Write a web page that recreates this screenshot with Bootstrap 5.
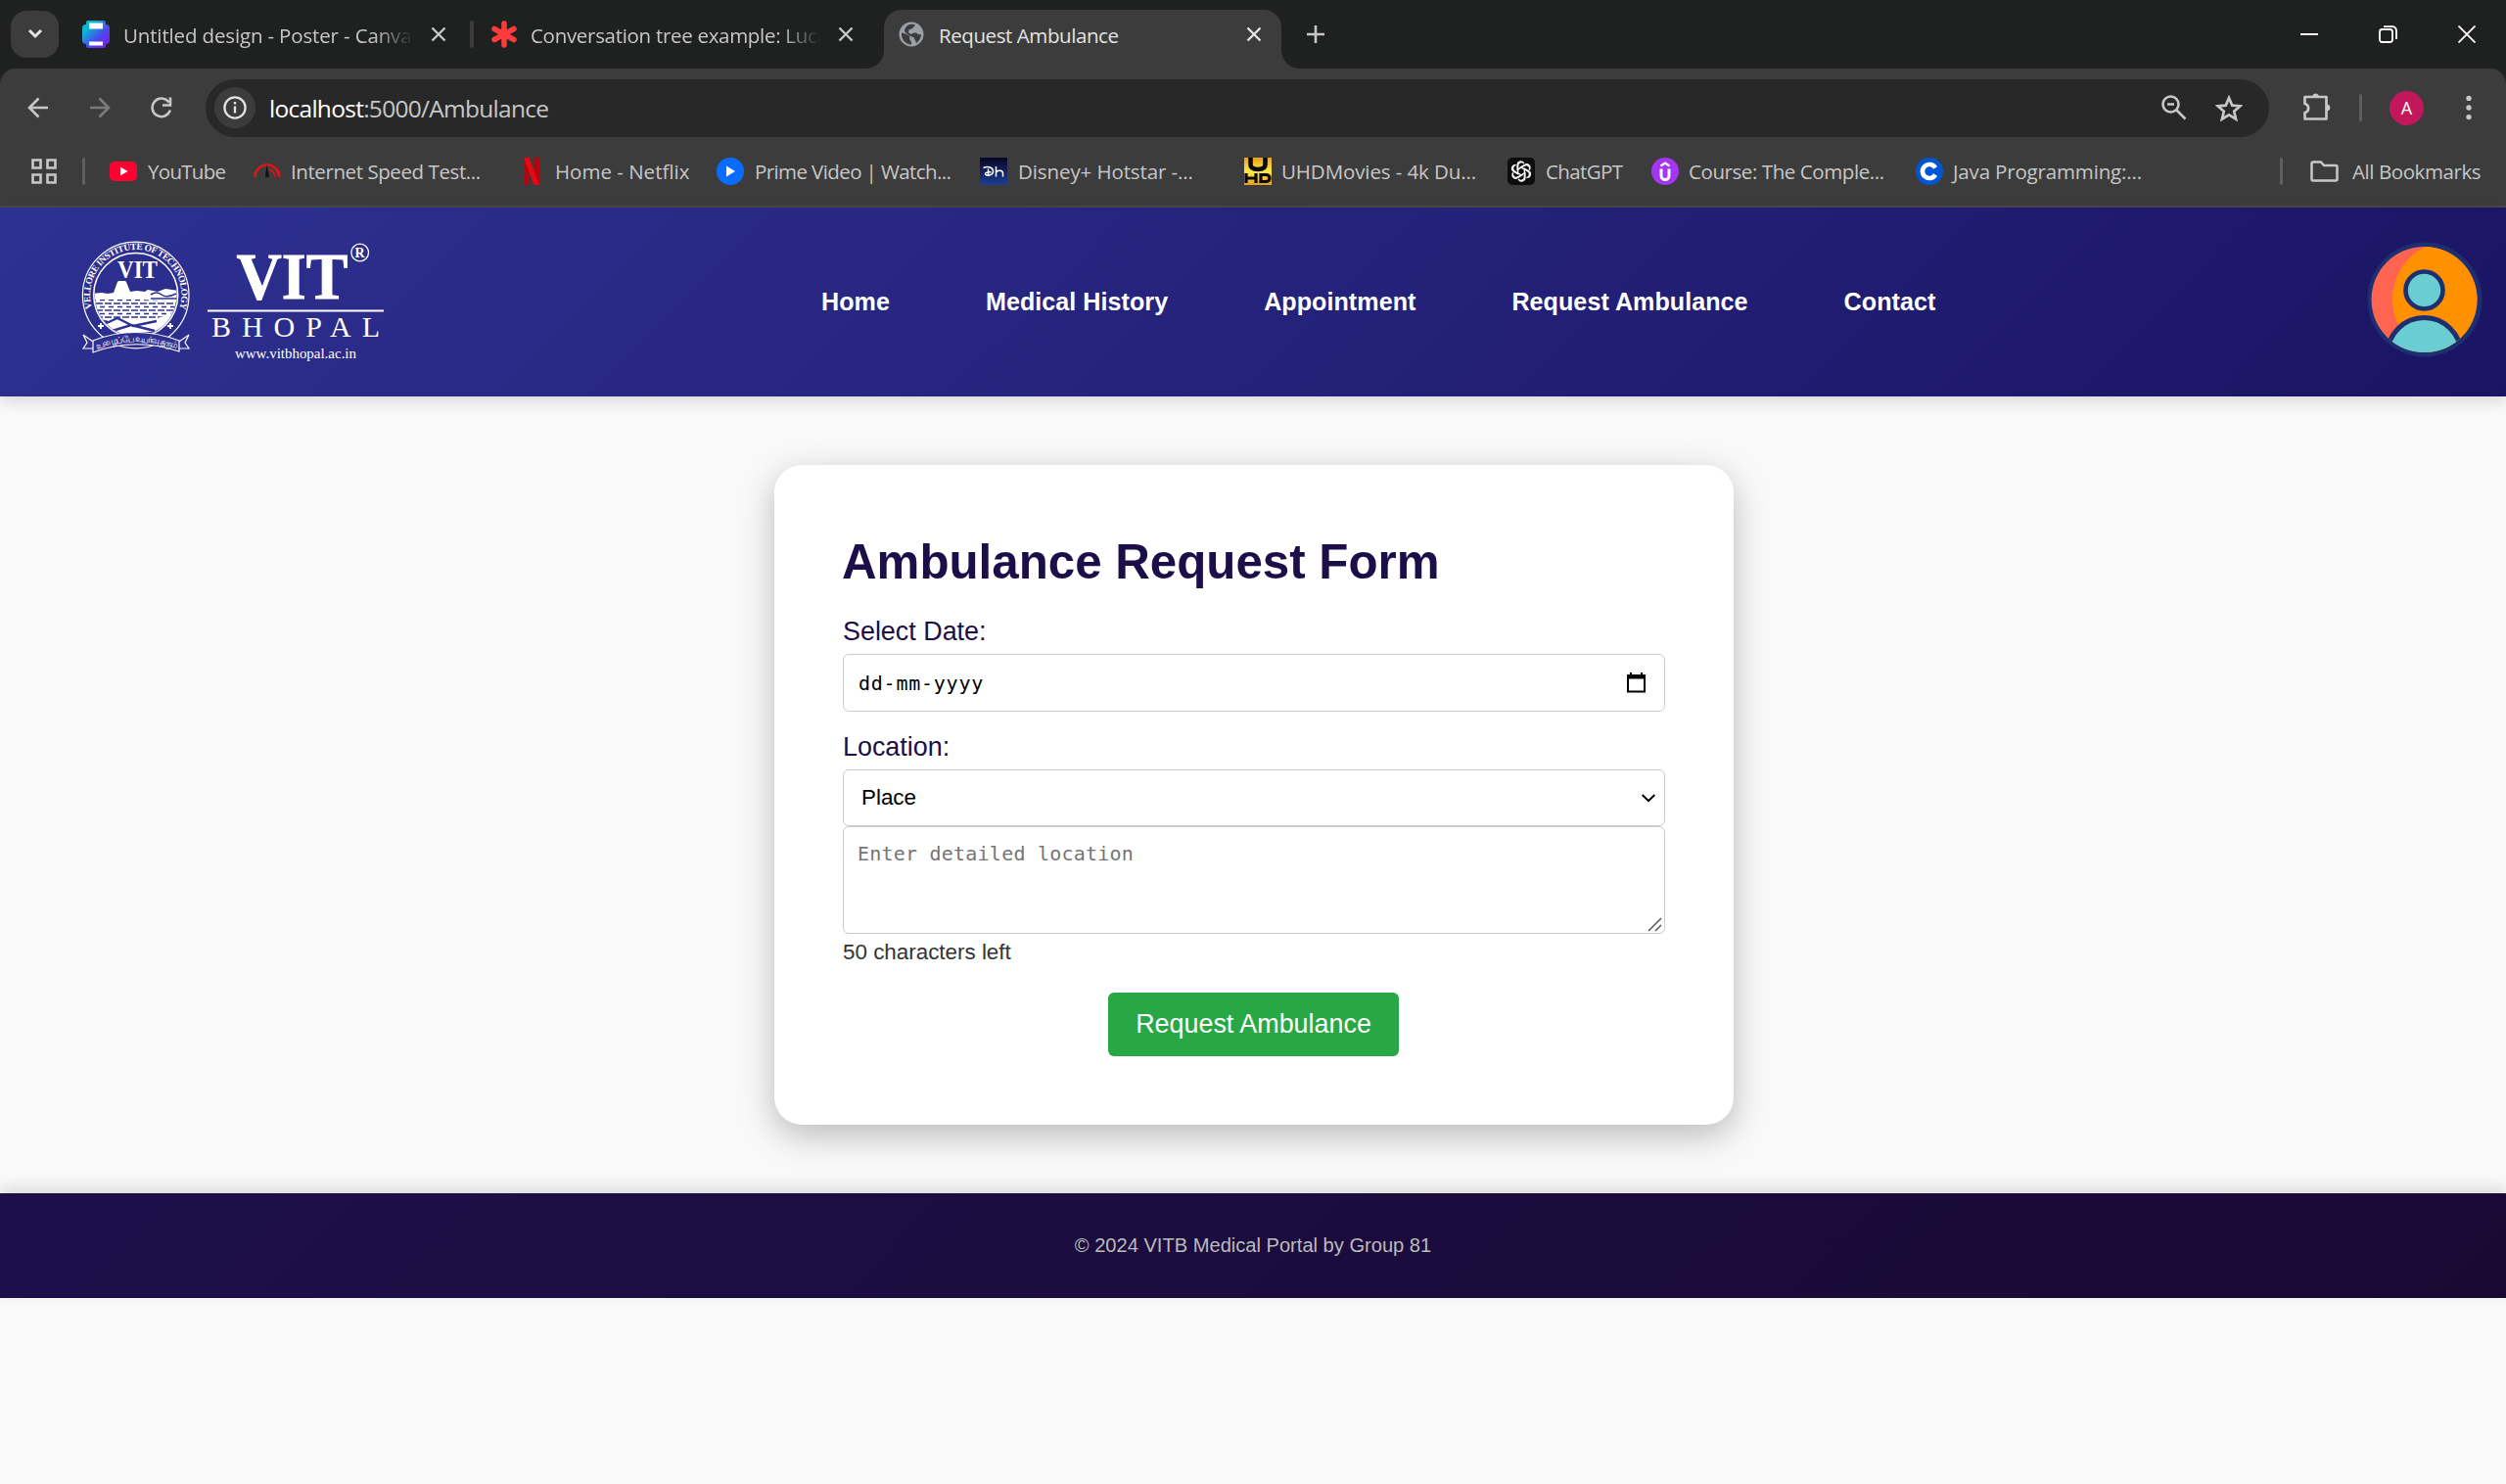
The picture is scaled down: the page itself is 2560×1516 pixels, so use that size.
<!DOCTYPE html>
<html lang="en">
<head>
<meta charset="utf-8">
<title>Request Ambulance</title>
<link href="https://cdn.jsdelivr.net/npm/bootstrap@5.3.0/dist/css/bootstrap.min.css" rel="stylesheet">
<style>
body{background:#f9f9f9;font-family:"Liberation Sans",Arial,sans-serif;overflow:hidden;width:2560px;height:1516px;line-height:1}
svg{display:block;flex:none}

/* browser window */
.chrome{font-family:"Open Sans","Noto Sans",sans-serif;color:#c7c7c7;font-size:20.5px;white-space:nowrap}
.tabstrip{height:70px;background:#1f2120}
.tabsearch{width:49px;height:48px;border-radius:16px;background:#3c3c3c;margin:11px 0 0 11px}
.tab-item{margin-left:24px}
.tab-text{overflow:hidden;line-height:30px;padding-top:2px;width:296px;margin:0 18px 0 14px;letter-spacing:-.3px}
.tab-text.loose{letter-spacing:-.15px}
.fade-end{-webkit-mask-image:linear-gradient(90deg,#000 calc(100% - 40px),transparent)}
.tab-live{margin:10px 26px 0 31px;padding:0 0 10px 15px;width:406px;height:60px;background:#3c3c3c;border-radius:18px 18px 0 0;position:relative;color:#e3e3e3}
.tab-live .tab-text{width:314px;margin:0 0 0 15px;letter-spacing:-.42px}
.tab-live::before,.tab-live::after{content:"";position:absolute;bottom:0;width:18px;height:18px}
.tab-live::before{left:-18px;background:radial-gradient(circle at 0 0,transparent 17.5px,#3c3c3c 18px)}
.tab-live::after{right:-18px;background:radial-gradient(circle at 100% 0,transparent 17.5px,#3c3c3c 18px)}
.tab-sep{width:4px;height:28px;border-radius:2px;background:#3c3c3c;margin-right:18px}
.win-keys{gap:62px;margin-right:31px}
.corner-bg{background:#1f2120}
.toolrow{height:80px;padding-left:28px;background:#3c3c3c;border-radius:16px 16px 0 0}
.arrows{gap:41px}
.omnibox{width:2108px;height:59px;border-radius:30px;background:#282828;margin:0 34px 0 34px}
.infoc{width:42px;height:42px;border-radius:50%;background:#3c3c3c;margin-left:9px}
.url-text{font-size:24.5px;letter-spacing:-.72px;margin-left:14px;line-height:40px;padding-top:2px}
.omni-icons{gap:29px;margin-right:27px}
.tool-end{gap:28px}
.dots{margin-left:15px}
.vsep{width:3px;height:28px;border-radius:2px;background:#5e5e5e}
.acct{width:35px;height:35px;border-radius:50%;background:#c2185b;color:#fff;font-size:18px}
.bookrow{height:62px;padding:0 26px 11px 32px;background:#3c3c3c;border-bottom:2px solid #474747}
.bookrow>.vsep{margin:0 25px 0 26px}
.bookrow>.vsep.last{margin:0 28px 0 auto}
.bm svg{margin-right:11px}
.bm span{padding-top:1px;line-height:28px}
.bm.tight svg{margin-right:10px}
.w147{width:147px}.w203{width:203px}.w269{width:269px}.w270{width:270px}
.k1{letter-spacing:-.1px}.k2{letter-spacing:-.16px}.k4{letter-spacing:-.42px}.k6{letter-spacing:-.6px}.k7{letter-spacing:-.7px}
.all-bm{width:174px}
.all-bm svg{margin-right:14px}

/* site */
.site-head{height:193px;padding:0 24px 0 80px;background:linear-gradient(135deg,#2e3192,#1b1464);box-shadow:0 6px 14px rgba(0,0,0,.12);position:relative}
.site-nav{margin:-2px 0 0 439px;gap:98px;font-weight:700;font-size:25.1px;letter-spacing:.05px;color:#fff;white-space:nowrap;line-height:30px}
.face{margin-top:-6px}
.page-main{padding-left:2px}
.form-card{width:980px;height:674px;margin-top:70px;border-radius:28px;padding:70px;background:#fff;box-shadow:0 11px 35px rgba(0,0,0,.25);border:0}
.form-card h1{font-size:49.28px;font-weight:700;color:#1c0e49;line-height:56px;margin:1px 0 0 -1px;white-space:nowrap}
.f-label{font-size:26.9px;color:#1c0e49;line-height:31px}
.f-label.one{margin:28px 0 7px}
.f-label.two{margin:21px 0 7px}
.box{border:1px solid #ccc;border-radius:6px;background:#fff;width:840px;color:#000}
.box-date{height:60px;padding:0 19px 0 15px}
.box-place{height:58px;padding:0 9px 0 18px;font-size:22.4px}
.mono{font-family:"DejaVu Sans Mono",monospace;font-size:20px;letter-spacing:.22px}
.box-date.mono{letter-spacing:.76px}
.box-area{height:110px;padding:15px 14px;line-height:24px;resize:none;display:block;outline:0}
.box-area::placeholder{color:#757575}
.grip{position:absolute;right:3px;bottom:2px}
.count-left{font-size:22.4px;line-height:26px;color:#333;margin-top:6px}
.req-btn{width:297px;height:65px;margin:28px 1px 0 0;border-radius:6px;background:#28a745;border:0;color:#fff;font-size:26.9px;padding:0;line-height:1}
.site-foot{margin-top:70px;height:107px;background:linear-gradient(135deg,#1d0f4a,#1a0933);box-shadow:0 -6px 14px rgba(0,0,0,.12);color:#bbb;font-size:20.1px}
</style>
<script src="https://cdn.jsdelivr.net/npm/bootstrap@5.3.0/dist/js/bootstrap.bundle.min.js"></script>
</head>
<body>
<div class="chrome">
 <div class="tabstrip d-flex">
  <div class="tabsearch d-flex align-items-center justify-content-center"><svg width="16" height="12" viewBox="0 0 16 12" fill="none" stroke="#e3e3e3" stroke-width="3"><path d="M2 2l6 6 6-6"/></svg></div>
  <div class="tab-item d-flex align-items-center">
   <svg width="28" height="28" viewBox="0 0 28 28"><defs><linearGradient id="cv" x1="0" y1="0" x2="1" y2="1"><stop offset="0" stop-color="#00c4cc"/><stop offset=".25" stop-color="#0bb5d5"/><stop offset=".6" stop-color="#4a48ee"/><stop offset="1" stop-color="#8b10f0"/></linearGradient></defs><path d="M6 0h16a2 2 0 0 1 2 2v2a4 4 0 0 1 4 4v12a4 4 0 0 1-4 4v2a2 2 0 0 1-2 2H6a2 2 0 0 1-2-2v-2a4 4 0 0 1-4-4V8a4 4 0 0 1 4-4V2a2 2 0 0 1 2-2z" fill="url(#cv)"/><path d="M7 2.500h14v6H7zM7 21.500h14v4H7z" fill="#fff"/></svg>
   <div class="tab-text loose fade-end">Untitled design - Poster - Canva</div>
   <svg width="16" height="16" viewBox="0 0 16 16" stroke="#c7c7c7" stroke-width="2.400"><path d="M1.500 1.500l13 13M14.500 1.500l-13 13"/></svg>
  </div>
  <div class="tab-item d-flex align-items-center">
   <div class="tab-sep"></div>
   <svg width="26" height="28" viewBox="0 0 26 28" stroke="#ff3b3b" stroke-width="5.500" stroke-linecap="round"><path d="M13 3v22M3 8.500l20 11M23 8.500l-20 11"/></svg>
   <div class="tab-text fade-end">Conversation tree example: Lucid</div>
   <svg width="16" height="16" viewBox="0 0 16 16" stroke="#c7c7c7" stroke-width="2.400"><path d="M1.500 1.500l13 13M14.500 1.500l-13 13"/></svg>
  </div>
  <div class="tab-live d-flex align-items-center">
   <svg width="26" height="26" viewBox="0 0 26 26"><circle cx="13" cy="13" r="12.500" fill="#9aa0a6"/><path d="M3 11.500c3 1 6 1 8 3.500 1 1.500-.5 3 1 4.500 1 1 1.500 1.500 1 4-6-.5-10.500-5-10-12zM10 3.500c2-1 5-1 7 0l-3 3.500-3.500 1.500-.5 3 3 1.500c2-1.500 5-2 6-.5 2.500 1.500 4 0 4 1 0 3-2.500 7-5 8.500-.5-3-2-3.500-2-5-1-2-5-1.500-6-3.500-.5-1-3-1.500-4-3.500 0-3 1.500-5 4-6.500z" fill="#3c3c3c"/></svg>
   <div class="tab-text">Request Ambulance</div>
   <svg width="16" height="16" viewBox="0 0 16 16" stroke="#e3e3e3" stroke-width="2.400"><path d="M1.500 1.500l13 13M14.500 1.500l-13 13"/></svg>
  </div>
  <svg class="align-self-center" width="18" height="18" viewBox="0 0 18 18" stroke="#c7c7c7" stroke-width="2.600"><path d="M9 0v18M0 9h18"/></svg>
  <div class="win-keys ms-auto d-flex align-items-center">
   <svg width="18" height="18" viewBox="0 0 18 18"><path d="M0 9h18" stroke="#fff" stroke-width="2"/></svg>
   <svg width="19" height="18" viewBox="0 0 19 18" fill="none" stroke="#fff" stroke-width="1.800"><rect x="1" y="4" width="13" height="13" rx="2.500"/><path d="M5 1.200h9a4 4 0 0 1 4 4V14"/></svg>
   <svg width="18" height="18" viewBox="0 0 18 18" stroke="#fff" stroke-width="1.800"><path d="M.5.5l17 17M17.500.5l-17 17"/></svg>
  </div>
 </div>
 <div class="corner-bg">
 <div class="toolrow d-flex align-items-center">
  <div class="arrows d-flex">
   <svg width="22" height="22" viewBox="0 0 22 22" fill="none" stroke="#c7c7c7" stroke-width="2.600"><path d="M21 11H2.500M11.500 1.500L2 11l9.500 9.500"/></svg>
   <svg width="22" height="22" viewBox="0 0 22 22" fill="none" stroke="#7c7c7c" stroke-width="2.600"><path d="M1 11h18.500M10.500 1.500L20 11l-9.500 9.500"/></svg>
   <svg width="22" height="22" viewBox="0 0 22 22" fill="none" stroke="#c7c7c7" stroke-width="2.600"><path d="M19.800 13.500A9.300 9.300 0 1 1 18.500 5.500M20 .5v8h-8"/></svg>
  </div>
  <div class="omnibox d-flex align-items-center">
   <div class="infoc d-flex align-items-center justify-content-center"><svg width="24" height="24" viewBox="0 0 24 24" fill="none" stroke="#e3e3e3" stroke-width="2.300"><circle cx="12" cy="12" r="10.600"/><path d="M12 10.500v7M12 6v2.500"/></svg></div>
   <div class="url-text"><span class="text-white">localhost</span>:5000/Ambulance</div>
   <div class="omni-icons ms-auto d-flex align-items-center">
    <svg width="26" height="26" viewBox="0 0 26 26" fill="none" stroke="#c7c7c7" stroke-width="2.600"><circle cx="9.500" cy="9.500" r="8"/><path d="M15.500 15.500l9 9M6 9.500h7"/></svg>
    <svg width="28" height="27" viewBox="0 0 28 27" fill="none" stroke="#c7c7c7" stroke-width="2.700"><path d="M14 3l3.200 7.600 8.200.700-6.200 5.400 1.900 8L14 20.400 6.900 24.700l1.900-8-6.200-5.400 8.200-.700z"/></svg>
   </div>
  </div>
  <div class="tool-end d-flex align-items-center">
   <svg width="30" height="30" viewBox="0 0 30 30" fill="none" stroke="#c7c7c7" stroke-width="2.700" stroke-linejoin="round"><path d="M2.500 4h22v22.500h-22v-6.500a4.600 4.600 0 0 0 0-9z"/><path d="M10.500 4a3 3 0 0 1 6 0zM25 12a3 3 0 0 1 0 6z" fill="#c7c7c7" stroke-width="1"/></svg>
   <div class="vsep"></div>
   <div class="acct d-flex align-items-center justify-content-center">A</div>
   <svg class="dots" width="6" height="28" viewBox="0 0 6 28" fill="#c7c7c7"><circle cx="3" cy="4.400" r="2.700"/><circle cx="3" cy="14" r="2.700"/><circle cx="3" cy="23.600" r="2.700"/></svg>
  </div>
 </div>
 </div>
 <div class="bookrow d-flex align-items-center">
  <svg width="26" height="26" viewBox="0 0 26 26" fill="none" stroke="#c7c7c7" stroke-width="2.600"><path d="M1.500 1.500h8v8h-8zM16.500 1.500h8v8h-8zM1.500 16.500h8v8h-8zM16.500 16.500h8v8h-8z"/></svg>
  <div class="vsep"></div>
  <div class="bm w147 k7 d-flex align-items-center"><svg width="28" height="20" viewBox="0 0 28 20"><rect width="28" height="20" rx="5" fill="#ff0033"/><path d="M11 5.500v9l7.500-4.500z" fill="#fff"/></svg><span>YouTube</span></div>
  <div class="bm tight w270 k4 d-flex align-items-center"><svg width="28" height="28" viewBox="0 0 28 28" fill="none" stroke="#e0141c" stroke-width="2.600"><path d="M1.500 20a12.500 12.500 0 1 1 25 0"/><path d="M16 12a9 9 0 0 1 6 8M16 7.500a13 13 0 0 1 9 10" stroke-width="1.600"/><path d="M13.500 7L12 20h4z" fill="#111" stroke="none"/></svg><span>Internet Speed Test...</span></div>
  <div class="bm tight w203 d-flex align-items-center"><svg width="28" height="28" viewBox="0 0 28 28"><path d="M6 0h5.500v28H6zM16.500 0H22v28h-5.500z" fill="#b1060f"/><path d="M6 0h5.500L22 28h-5.500z" fill="#e50914"/></svg><span>Home - Netflix</span></div>
  <div class="bm w269 k6 d-flex align-items-center"><svg width="28" height="28" viewBox="0 0 28 28"><circle cx="14" cy="14" r="14" fill="#0a6cff"/><path d="M10 8.500v11l9-5.500z" fill="#fff"/></svg><span>Prime Video | Watch...</span></div>
  <div class="bm w270 k1 d-flex align-items-center"><svg width="28" height="28" viewBox="0 0 28 28"><defs><linearGradient id="hs" x1="0" y1="0" x2="0" y2="1"><stop offset="0" stop-color="#070724"/><stop offset="1" stop-color="#1d3d94"/></linearGradient></defs><rect width="28" height="28" fill="url(#hs)"/><path d="M3.500 10.500c5-2 10-.5 10 3.500 0 4.500-7 5-8 3-.5-1.500 3-2.500 6-2M8.500 11.500v6M16.500 9v10.500M16.500 15.500c1-3 7-3 7 .5v3.500" fill="none" stroke="#fff" stroke-width="1.500"/></svg><span>Disney+ Hotstar -...</span></div>
  <div class="bm tight w269 k1 d-flex align-items-center"><svg width="28" height="28" viewBox="0 0 28 28"><defs><linearGradient id="uh" x1="0" y1="0" x2="0" y2="1"><stop offset="0" stop-color="#e99e1c"/><stop offset=".5" stop-color="#ffe94a"/><stop offset="1" stop-color="#e99e1c"/></linearGradient></defs><rect width="28" height="28" fill="url(#uh)"/><path d="M6.500 0v7q0 5 7.500 5t7.500-5V0" fill="none" stroke="#0a0a0a" stroke-width="4.600"/><path d="M2 16v10M2 21h9M12 16v10M17 17.500v7h5.500q3.500-.5 3.500-3.500t-3.500-3.500z" fill="none" stroke="#0a0a0a" stroke-width="3.200"/></svg><span>UHDMovies - 4k Du...</span></div>
  <div class="bm w147 k6 d-flex align-items-center"><svg width="28" height="28" viewBox="0 0 28 28"><rect width="28" height="28" rx="5" fill="#0d0d0d"/><g fill="none" stroke="#fff" stroke-width="1.250"><path id="petal" d="M10.700 16V8.200a3.500 3.500 0 0 1 6.300-2.100M12.600 10.200l5.200-3a3.500 3.500 0 0 1 5 4.300"/><use href="#petal" transform="rotate(60 14 14)"/><use href="#petal" transform="rotate(120 14 14)"/><use href="#petal" transform="rotate(180 14 14)"/><use href="#petal" transform="rotate(240 14 14)"/><use href="#petal" transform="rotate(300 14 14)"/></g></svg><span>ChatGPT</span></div>
  <div class="bm tight w270 k4 d-flex align-items-center"><svg width="28" height="28" viewBox="0 0 28 28"><circle cx="14" cy="14" r="14" fill="#a435f0"/><path d="M9.500 8.500L14 5.500l4.500 3" fill="none" stroke="#fff" stroke-width="2.200"/><path d="M10 11.500v7a4 4 0 0 0 8 0v-7" fill="none" stroke="#fff" stroke-width="3"/></svg><span>Course: The Comple...</span></div>
  <div class="bm tight k2 d-flex align-items-center"><svg width="28" height="28" viewBox="0 0 28 28"><circle cx="14" cy="14" r="14" fill="#0056d2"/><path d="M20 10.500a7 7 0 1 0 0 7" fill="none" stroke="#fff" stroke-width="4.600"/></svg><span>Java Programming:...</span></div>
  <div class="vsep last"></div>
  <div class="bm all-bm k4 d-flex align-items-center"><svg width="29" height="22" viewBox="0 0 29 22" fill="none" stroke="#c7c7c7" stroke-width="2.500" stroke-linejoin="round"><path d="M3 1.500h8l3 3.500h12a1.500 1.500 0 0 1 1.500 1.500v12.500a1.500 1.500 0 0 1-1.500 1.500H3A1.500 1.500 0 0 1 1.500 19V3A1.500 1.500 0 0 1 3 1.500z"/></svg><span>All Bookmarks</span></div>
 </div>
</div>

<header class="site-head d-flex align-items-center">
 <svg width="320" height="130" viewBox="80 243 320 130" fill="#fff" font-family="Liberation Serif,serif">
  <defs><path id="ring" d="M105.600 333.600A46.700 46.700 0 1 1 171.800 333.600"/><path id="rib" d="M98 356q40-15 85 0"/>
  <pattern id="bricks" width="9" height="7" patternUnits="userSpaceOnUse"><path d="M0 1h6M8 1h1M3 4.500h5" stroke="#2e3192" stroke-width="1.300"/></pattern><clipPath id="inner"><circle cx="138.700" cy="300.500" r="42"/></clipPath></defs>
  <circle cx="138.700" cy="300.500" r="54.300" fill="none" stroke="#fff" stroke-width="1.200"/>
  <circle cx="138.700" cy="300.500" r="43" fill="none" stroke="#fff" stroke-width="1.500"/>
  <text font-size="9.500" font-weight="700"><textPath href="#ring" startOffset="23" textLength="174">VELLORE INSTITUTE OF TECHNOLOGY</textPath></text>
  <text x="120" y="283" font-size="25" font-weight="700" textLength="41" lengthAdjust="spacingAndGlyphs">VIT</text>
  <g clip-path="url(#inner)"><path d="M94 299l10-1 6 1 6-1 4-11 1-1h7l1 1 4 10 7-1 8 1 3-2 10 2 8-3 14 2v32l-28 12H94z"/><path d="M96 305h48l38 2v10l-24 8H96z" fill="url(#bricks)"/><path d="M154 300q6-4 11 0t15-1M154 304h30" fill="none" stroke="#2e3192" stroke-width="1.600"/><path d="M100 333l20-9 16 8 24-5M108 339l26-8 24 6M122 341l34-2M96 325l14 3" fill="none" stroke="#2e3192" stroke-width="2.400"/></g>
  <path d="M103 329v6M100 332h6M174 329v6M171 332h6" stroke="#fff" stroke-width="1.800"/>
  <path d="M95 347q43-17 88 0v11q-45-15-88 1zM95 348l-10-7 4 8-4 6h10M183 348l10-7-4 8 4 6h-10" fill="#2e3192" stroke="#fff" stroke-width="1.200"/>
  <text font-size="9" font-family="Noto Sans,sans-serif"><textPath href="#rib" startOffset="1" textLength="83">உழைப்பே உயர்வு தரும்</textPath></text>
  <text x="241.500" y="303.500" font-size="67" font-weight="700" textLength="114" lengthAdjust="spacingAndGlyphs" stroke="#fff" stroke-width=".8">VIT</text>
  <circle cx="367.700" cy="257" r="8.800" fill="none" stroke="#fff" stroke-width="1.300"/><text x="362.400" y="261.800" font-size="14" font-weight="700">R</text>
  <path d="M212 316.500h180" stroke="#fff" stroke-width="1.900"/>
  <text x="216" y="342.500" font-size="30" textLength="172">BHOPAL</text>
  <text x="240" y="364.500" font-size="15" textLength="124" lengthAdjust="spacingAndGlyphs">www.vitbhopal.ac.in</text>
 </svg>
 <nav class="site-nav d-flex">
  <span>Home</span><span>Medical History</span><span>Appointment</span><span>Request Ambulance</span><span>Contact</span>
 </nav>
 <svg class="face ms-auto" width="118" height="118" viewBox="0 0 118 118"><defs><clipPath id="face"><circle cx="58.500" cy="59" r="54"/></clipPath></defs><circle cx="59" cy="59" r="58.500" fill="#1c2f70"/><g clip-path="url(#face)"><rect width="118" height="118" fill="#ff6450"/><circle cx="86.500" cy="59" r="60.500" fill="#ff9100"/><circle cx="58.500" cy="115" r="37.500" fill="#69cdd2" stroke="#1d2f6f" stroke-width="5"/></g><circle cx="58.500" cy="49.500" r="19" fill="#69cdd2" stroke="#1d2f6f" stroke-width="4.600"/></svg>
</header>

<main class="page-main d-flex justify-content-center">
 <form class="form-card card" onsubmit="return false">
  <h1>Ambulance Request Form</h1>
  <label class="f-label one">Select Date:</label>
  <div class="box box-date mono d-flex align-items-center justify-content-between"><span>dd-mm-yyyy</span><svg width="19" height="21" viewBox="0 0 19 21"><path d="M4 0v3M15 0v3" stroke="#000" stroke-width="2"/><path d="M1 3h17v16.500H1z" fill="none" stroke="#000" stroke-width="2"/><path d="M0 2h19v4.500H0z"/></svg></div>
  <label class="f-label two">Location:</label>
  <div class="box box-place d-flex align-items-center justify-content-between"><span>Place</span><svg width="14" height="9" viewBox="0 0 14 9" fill="none" stroke="#000" stroke-width="2"><path d="M.7 1L7 7.200 13.300 1"/></svg></div>
  <div class="position-relative"><textarea class="box box-area mono" placeholder="Enter detailed location"></textarea><svg class="grip" width="15" height="15" viewBox="0 0 15 15" stroke="#555" stroke-width="1.500"><path d="M1 14L14 1M8 14l6-6"/></svg></div>
  <div class="count-left">50 characters left</div>
  <div class="d-flex justify-content-center"><button class="btn req-btn" type="submit">Request Ambulance</button></div>
 </form>
</main>
<footer class="site-foot d-flex align-items-center justify-content-center">© 2024 VITB Medical Portal by Group 81</footer>
</body>
</html>
